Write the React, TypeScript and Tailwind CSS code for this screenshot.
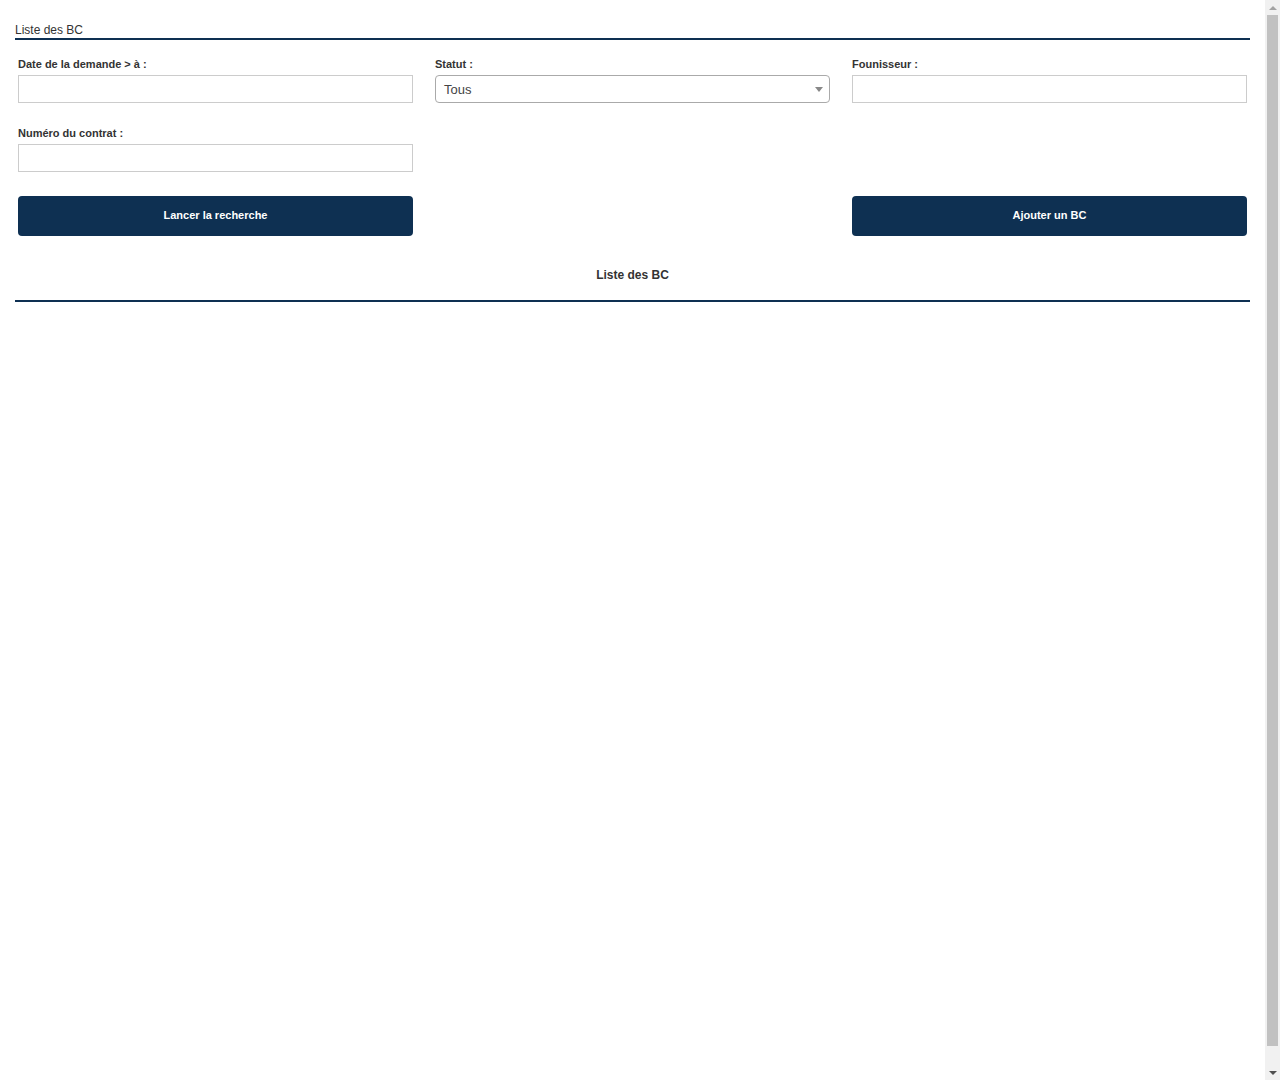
import React from 'react';

const Field = ({ label, children }: { label: string; children: React.ReactNode }) => (
  <div className="flex flex-col">
    <label className="text-[11px] font-bold leading-[15px] text-[#333] mb-[3px]">{label}</label>
    {children}
  </div>
);

const TextInput = () => (
  <input type="text" className="h-[28px] w-full border border-[#ccc] bg-white px-2 text-[13px] outline-none" />
);

const Scrollbar = () => (
  <div className="flex h-full w-[15px] flex-col bg-[#f1f1f1]">
    <div className="flex h-[15px] items-center justify-center">
      <span className="h-0 w-0 border-x-[4px] border-b-[4px] border-x-transparent border-b-[#a3a3a3]" />
    </div>
    <div className="mx-[2px] flex-1 pb-[19px]">
      <div className="h-full bg-[#c1c1c1]" />
    </div>
    <div className="flex h-[15px] items-center justify-center">
      <span className="h-0 w-0 border-x-[4px] border-t-[4px] border-x-transparent border-t-[#505050]" />
    </div>
  </div>
);

export default function App() {
  return (
    <div
      className="flex h-[1080px] overflow-hidden bg-white text-[#333]"
      style={{ fontFamily: '"Liberation Sans", Arial, sans-serif' }}
    >
      <div className="flex-1 px-[15px]">
        <div className="pt-[22px] border-b-2 border-[#0e3052]">
          <span className="block text-[12px] leading-[16px] text-[#333]">Liste des BC</span>
        </div>

        <div className="px-[3px] pt-[17px]">
          <div className="grid grid-cols-3 gap-x-[22px]">
            <Field label="Date de la demande > à :">
              <TextInput />
            </Field>
            <Field label="Statut :">
              <div className="relative flex h-[28px] items-center rounded-[4px] border border-[#aaa] bg-white pl-[8px] pt-px">
                <span className="text-[13px] text-[#444]">Tous</span>
                <span className="absolute right-[6px] top-[11px] h-0 w-0 border-x-[4px] border-t-[5px] border-x-transparent border-t-[#888]" />
              </div>
            </Field>
            <Field label="Founisseur :">
              <TextInput />
            </Field>
          </div>

          <div className="grid grid-cols-3 gap-x-[22px] mt-[23px]">
            <Field label="Numéro du contrat :">
              <TextInput />
            </Field>
          </div>

          <div className="grid grid-cols-3 gap-x-[22px] mt-[24px]">
            <button className="h-[40px] rounded-[4px] bg-[#0e3052] pb-px text-[11px] font-bold text-white">
              Lancer la recherche
            </button>
            <div />
            <button className="h-[40px] rounded-[4px] bg-[#0e3052] pb-px text-[11px] font-bold text-white">
              Ajouter un BC
            </button>
          </div>
        </div>

        <div className="mt-[31px] border-b-2 border-[#0e3052] pb-[17px] text-center">
          <span className="block text-[12px] font-bold leading-[16px] text-[#333]">Liste des BC</span>
        </div>
      </div>
      <Scrollbar />
    </div>
  );
}
